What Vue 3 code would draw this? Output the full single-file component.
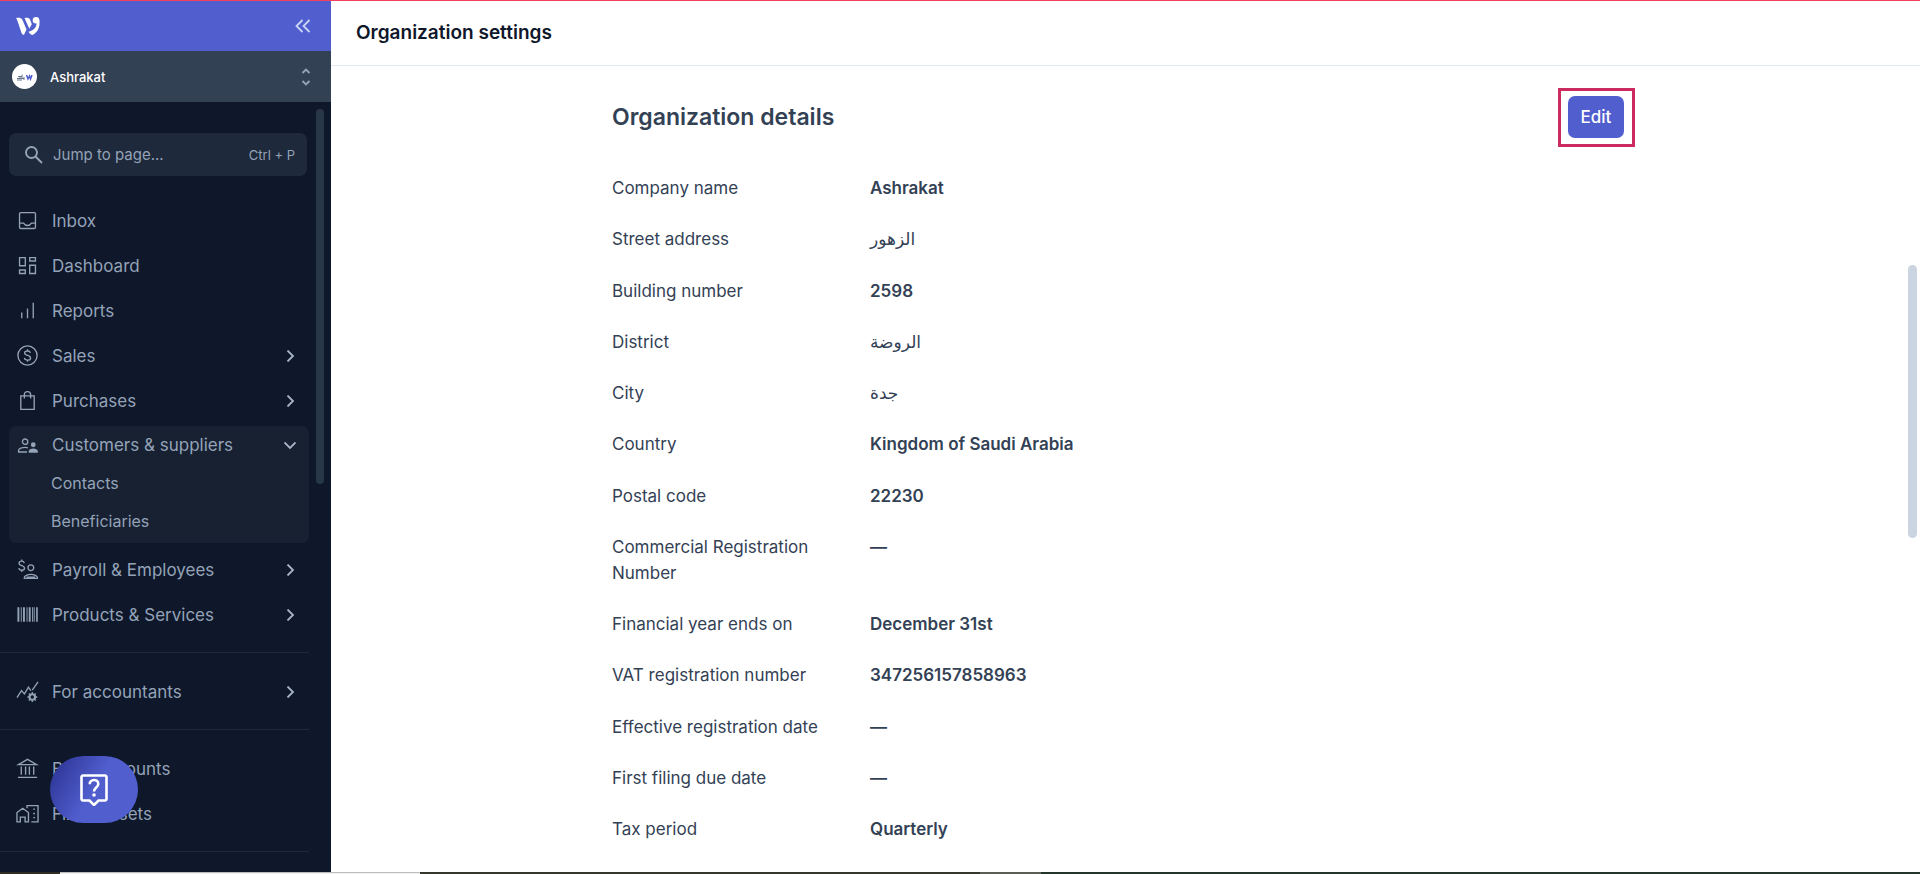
<script setup>
import { ref } from 'vue'

const search = ref('')

// each icon is a list of svg paths on a 24x24 grid
const icons = {
  inbox: { stroke: ['M5 3.7h14a1.3 1.3 0 0 1 1.3 1.3v14a1.3 1.3 0 0 1-1.3 1.3H5A1.3 1.3 0 0 1 3.7 19V5A1.3 1.3 0 0 1 5 3.7z', 'M3.7 14.7h4.2c1 1.6 2.4 2.5 4.1 2.5s3.1-.9 4.1-2.5h4.2'] },
  dashboard: { stroke: ['M3.7 3.7h6v8.6h-6z', 'M14.3 3.7h6v3.6h-6z', 'M3.7 16.7h6v3.6h-6z', 'M14.3 11.7h6v8.6h-6z'] },
  reports: { stroke: ['M6 14v6M12 10v10M18 4v16'] },
  sales: { stroke: ['M12 2a10 10 0 1 0 0 20 10 10 0 0 0 0-20z', 'M15 9.3C14.7 8 13.7 7.3 12 7.3c-1.9 0-3 .9-3 2.2 0 3.3 6.2 1.6 6.2 5 0 1.4-1.2 2.3-3.2 2.3-1.8 0-3-.8-3.3-2.3M12 5.5v1.8M12 16.8v1.8'] },
  purchases: { stroke: ['M5 7.2h14v14H5z', 'M8.7 10V6a3.3 3.3 0 0 1 6.6 0v4'] },
  customers: {
    stroke: ['M9.5 5.2a2.8 2.8 0 1 0 0 5.6 2.8 2.8 0 0 0 0-5.6z', 'M12.5 14.4c-1-.3-2-.4-3-.4-2.800 0-6.800 1.200-6.800 3.200v1.600h8.800'],
    fill: ['M18 8.7a2.500 2.500 0 1 1 0 5 2.500 2.500 0 0 1 0-5z', 'M13.300 19.500v-1.600c0-1.600 2.500-2.700 4.700-2.700s4.700 1.100 4.700 2.700v1.600z']
  },
  payroll: {
    stroke: ['M8.700 5.300C8.300 3.900 7.300 3.300 6 3.300c-1.600 0-2.800.8-2.800 2.200 0 3.200 5.700 1.700 5.700 4.900 0 1.500-1.200 2.300-2.800 2.300s-2.800-.8-3.100-2.200M6 1.500v1.800M6 12.700v1.800', 'M15.500 7.200a3 3 0 1 0 0 6 3 3 0 0 0 0-6z', 'M8.700 21.300v-1c0-1.700 3.500-3.200 6.800-3.200s6.800 1.500 6.800 3.200v1z'],
    fill: ['M11 19.300h9v2.200h-9z']
  },
  products: { fill: ['M1.500 4.500h2v15h-2zM5 4.500h1v15H5zM7.300 4.500h2v15h-2zM11 4.500h1v15h-1zM13.300 4.500h2v15h-2zM16.800 4.500h1v15h-1zM18.500 4.500h1v15h-1zM21 4.500h1.700v15H21z'] },
  accountants: {
    stroke: ['M1 18.500 5.700 11l3.100 3.500L13 7.500l2.500 3.500M17 10.500l6-8.500', 'M17 14.400a3.300 3.300 0 1 0 0 6.600 3.300 3.300 0 0 0 0-6.600z', 'M17 15.200a2.500 2.500 0 1 0 0 5 2.500 2.500 0 0 0 0-5z', 'M17 12.500v2M17 21v2M11.900 17.700h2M20.200 17.700h2M13.400 14.100l1.400 1.400M19.200 19.900l1.400 1.400M13.400 21.300l1.400-1.400M19.200 15.500l1.400-1.400']
  },
  bank: { stroke: ['M2.500 8 12 2.500 21.500 8z', 'M5.500 10v8.500M10 10v8.500M14 10v8.500M18.500 10v8.500M2 21.300h20'] },
  assets: { stroke: ['M1 20.800V11l6-4.500 6 4.500v9.800H9.500v-5h-5v5z', 'M11.500 6.500V3.700H23v17.100h-7', 'M18 7.500h1.800M18 12h1.800M18 16.300h1.800'] }
}

const navGroups = [
  [
    { label: 'Inbox', icon: 'inbox' },
    { label: 'Dashboard', icon: 'dashboard' },
    { label: 'Reports', icon: 'reports' },
    { label: 'Sales', icon: 'sales', arrow: true },
    { label: 'Purchases', icon: 'purchases', arrow: true },
    { label: 'Customers & suppliers', icon: 'customers', arrow: true, children: ['Contacts', 'Beneficiaries'] },
    { label: 'Payroll & Employees', icon: 'payroll', arrow: true },
    { label: 'Products & Services', icon: 'products', arrow: true }
  ],
  [{ label: 'For accountants', icon: 'accountants', arrow: true }],
  [
    { label: 'Bank accounts', icon: 'bank' },
    { label: 'Fixed assets', icon: 'assets' }
  ]
]

const details = [
  { label: 'Company name', value: 'Ashrakat' },
  { label: 'Street address', value: 'الزهور', arabic: true },
  { label: 'Building number', value: '2598' },
  { label: 'District', value: 'الروضة', arabic: true },
  { label: 'City', value: 'جدة', arabic: true },
  { label: 'Country', value: 'Kingdom of Saudi Arabia' },
  { label: 'Postal code', value: '22230' },
  { label: 'Commercial Registration Number', value: '—' },
  { label: 'Financial year ends on', value: 'December 31st' },
  { label: 'VAT registration number', value: '347256157858963' },
  { label: 'Effective registration date', value: '—' },
  { label: 'First filing due date', value: '—' },
  { label: 'Tax period', value: 'Quarterly' }
]
</script>

<template>
  <div class="page">
    <div class="app">
      <aside class="sidebar">
        <div class="brand">
          <svg class="logo" viewBox="0 0 24 18" fill="#fff">
            <path d="M0 1C2.500.4 5.500.6 6.500 3l4 9.500L8 17.800C6.500 17.800 6 17 5.500 16L1.500 4C1.100 2.700.6 1.800 0 1z" />
            <path d="M8.500 1c2.500-.6 4.700-.2 5.600 1.800l1.700 4.500-2.500 4.500L9.600 3.500C9.300 2.500 9 1.700 8.500 1z" />
            <circle cx="20" cy="3.300" r="3.300" />
            <path d="M23.300 3c1 6-1 12-6.800 15-1.500 0-3-1.500-4-3.200 4.500-1.300 8.200-4 8.200-9.300z" />
          </svg>
          <button class="icon-btn" aria-label="Collapse sidebar">
            <svg width="16" height="14" viewBox="0 0 16 14" fill="none" stroke="#cbd5f5" stroke-width="1.800">
              <path d="M7.500 1 1.500 7l6 6M14.500 1l-6 6 6 6" />
            </svg>
          </button>
        </div>

        <button class="org">
          <span class="org-avatar">
            <svg width="17" height="8" viewBox="0 0 17 8" fill="none">
              <path d="M1 5.500h7M4 3v2.500M6 1.500v4M2 3.500h4M1 7h5M8 4v3" stroke="#64748b" />
              <path d="m10.500 2 1.500 4 1.500-3 1 3 1.500-4" stroke="#505ece" stroke-width="1.500" />
            </svg>
          </span>
          <span class="org-name">Ashrakat</span>
          <svg width="10" height="18" viewBox="0 0 10 18" fill="none" stroke="#94a3b8" stroke-width="1.900">
            <path d="m1.500 5 3.500-3.500L8.500 5M1.500 13 5 16.500 8.500 13" />
          </svg>
        </button>

        <div class="sidebar-body">
          <label class="search">
            <svg width="18" height="18" viewBox="0 0 18 18" fill="none" stroke="#94a3b8" stroke-width="1.900">
              <circle cx="6.500" cy="6.500" r="5.500" />
              <path d="m10.500 10.500 6.500 6.500" />
            </svg>
            <input v-model="search" type="text" placeholder="Jump to page..." aria-label="Jump to page" />
            <kbd>Ctrl + P</kbd>
          </label>

          <nav class="nav">
            <div v-for="(group, i) in navGroups" :key="i" class="nav-group">
              <div v-for="item in group" :key="item.label" :class="{ 'nav-open': item.children }">
                <a href="#" class="nav-item">
                  <svg class="nav-icon" viewBox="0 0 24 24">
                    <path v-for="d in icons[item.icon].stroke" :key="d" :d="d" class="line" />
                    <path v-for="d in icons[item.icon].fill" :key="d" :d="d" class="solid" />
                  </svg>
                  <span class="nav-label">{{ item.label }}</span>
                  <svg v-if="item.arrow" class="chevron" :class="{ down: item.children }" viewBox="0 0 12 12">
                    <path d="m3.500.5 5.500 5.500-5.500 5.500" />
                  </svg>
                </a>
                <a v-for="child in item.children" :key="child" href="#" class="nav-child">{{ child }}</a>
              </div>
            </div>
          </nav>
          <div class="sidebar-thumb"></div>
        </div>

        <button class="help" aria-label="Help">
          <svg width="28" height="32" viewBox="0 0 28 32" fill="none" stroke="#fff" stroke-width="2.600">
            <path d="M3 1.500h22a1.500 1.500 0 0 1 1.500 1.500v22a1.500 1.500 0 0 1-1.500 1.500h-6.500L14 31l-4.500-4.500H3A1.500 1.500 0 0 1 1.500 25V3A1.500 1.500 0 0 1 3 1.500z" />
            <path d="M9.700 10.300c0-2.500 1.800-4.300 4.300-4.300s4.300 1.600 4.300 3.900c0 3.600-4.300 3.500-4.300 7.600" />
            <circle cx="14" cy="21" r="1.800" fill="#fff" stroke="none" />
          </svg>
        </button>
      </aside>

      <main class="main">
        <header class="main-header">
          <h1>Organization settings</h1>
        </header>
        <section class="content">
          <div class="content-inner">
            <div class="section-head">
              <h2>Organization details</h2>
              <div class="edit-wrap">
                <button class="edit">Edit</button>
                <span class="edit-frame"></span>
              </div>
            </div>
            <dl class="details">
              <div v-for="row in details" :key="row.label" class="detail">
                <dt>{{ row.label }}</dt>
                <dd :class="{ arabic: row.arabic }">{{ row.value }}</dd>
              </div>
            </dl>
          </div>
          <div class="main-thumb"></div>
        </section>
      </main>
    </div>
    <footer class="taskbar">
      <span class="task dark"></span>
      <span class="task light"></span>
      <span class="task olive"></span>
      <span class="task active"></span>
      <span class="task green"></span>
    </footer>
  </div>
</template>

<style>
body {
  margin: 0;
  overflow: hidden;
}
</style>

<style scoped>
.page {
  display: flex;
  flex-direction: column;
  height: 100vh;
  box-sizing: border-box;
  border-top: 1px solid #f43f5e;
  font-family: Inter, "Noto Sans", "Liberation Sans", sans-serif;
  font-size: 17px;
  line-height: 26px;
  color: #334155;
  background: #fff;
}

button {
  font: inherit;
  border: 0;
  cursor: pointer;
}

a {
  color: inherit;
  text-decoration: none;
}

.app {
  flex: 1;
  min-height: 0;
  display: flex;
}

.sidebar {
  position: relative;
  flex: none;
  width: 331px;
  display: flex;
  flex-direction: column;
  background: #0f172a;
  color: #94a3b8;
}

.brand {
  flex: none;
  display: flex;
  align-items: center;
  justify-content: space-between;
  height: 50px;
  padding: 0 20px 0 16px;
  background: #505ece;
}

.logo {
  width: 24px;
  height: 18px;
}

.icon-btn {
  display: flex;
  padding: 0;
  background: none;
}

.org {
  flex: none;
  display: flex;
  align-items: center;
  height: 51px;
  padding: 0 20px 0 12px;
  background: #334155;
  color: #fff;
  text-align: left;
}

.org-avatar {
  display: flex;
  align-items: center;
  justify-content: center;
  width: 25px;
  height: 25px;
  margin-right: 13px;
  border-radius: 50%;
  background: #fff;
}

.org-name {
  flex: 1;
  font-size: 13px;
  font-weight: 500;
}

.sidebar-body {
  position: relative;
  flex: 1;
  min-height: 0;
  overflow: hidden;
  padding: 31px 22px 0 0;
}

.search {
  display: flex;
  align-items: center;
  height: 43px;
  margin: 0 2px 0 9px;
  padding: 0 12px 0 16px;
  box-sizing: border-box;
  border-radius: 7px;
  background: #1e293b;
}

.search input {
  flex: 1;
  min-width: 0;
  margin-left: 10px;
  padding: 0;
  border: 0;
  outline: 0;
  background: none;
  font: inherit;
  font-size: 15px;
  color: #94a3b8;
}

.search input::placeholder {
  color: #94a3b8;
  opacity: 1;
}

.search kbd {
  font-family: inherit;
  font-size: 13px;
}

.nav {
  padding-top: 22px;
}

.nav-group {
  padding-bottom: 15px;
  margin-bottom: 16px;
  border-bottom: 1px solid #1e293b;
}

.nav-item {
  display: flex;
  align-items: center;
  height: 45px;
  padding: 0 13px 0 16px;
}

.nav-icon {
  width: 23px;
  height: 23px;
  margin-right: 13px;
}

.line {
  fill: none;
  stroke: #94a3b8;
  stroke-width: 1.4;
}

.solid {
  fill: #94a3b8;
}

.nav-label {
  flex: 1;
}

.chevron {
  width: 12px;
  height: 12px;
  fill: none;
  stroke: #a8b5c7;
  stroke-width: 1.8;
}

.down {
  transform: rotate(90deg);
}

.nav-open {
  margin: 3px 0 4px 9px;
  padding-bottom: 3px;
  border-radius: 7px;
  background: #172132;
}

.nav-open .nav-item {
  height: 38px;
  padding-left: 7px;
}

.nav-child {
  display: block;
  height: 38px;
  padding-left: 42px;
  font-size: 16px;
  line-height: 38px;
}

.sidebar-thumb {
  position: absolute;
  top: 7px;
  right: 7px;
  width: 8px;
  height: 375px;
  border-radius: 4px;
  background: #283747;
}

.help {
  position: absolute;
  left: 50px;
  bottom: 49px;
  display: flex;
  align-items: center;
  justify-content: center;
  width: 88px;
  height: 67px;
  padding: 0;
  border-radius: 34px;
  background: linear-gradient(120deg, #2d3494 5%, #505ece 50%);
}

.main {
  flex: 1;
  min-width: 0;
  display: flex;
  flex-direction: column;
}

.main-header {
  flex: none;
  display: flex;
  align-items: center;
  height: 64px;
  padding: 0 25px;
  border-bottom: 1px solid #e2e8f0;
}

h1 {
  margin: 0;
  font-size: 19px;
  font-weight: 600;
  color: #0f172a;
}

.content {
  position: relative;
  flex: 1;
  min-height: 0;
  display: flex;
  overflow: hidden;
  padding: 30px 15px 30px 0;
}

.content-inner {
  flex: 1;
  display: flex;
  flex-direction: column;
  max-width: 1012px;
  margin: 0 auto;
}

.section-head {
  display: flex;
  align-items: center;
  justify-content: space-between;
}

h2 {
  margin: 0;
  font-size: 23px;
  font-weight: 600;
}

.edit-wrap {
  position: relative;
}

.edit {
  display: block;
  min-width: 56px;
  height: 42px;
  padding: 0 12px;
  border-radius: 7px;
  background: #505ece;
  color: #fff;
  font-weight: 500;
}

.edit-frame {
  position: absolute;
  inset: -8px -11px -9px -10px;
  border: 3px solid #cb2b5e;
  pointer-events: none;
}

.details {
  flex: 1;
  display: flex;
  flex-direction: column;
  justify-content: space-between;
  gap: 24px;
  margin: 37px 0 0;
}

.detail {
  display: flex;
}

dt {
  flex: none;
  width: 234px;
  padding-right: 24px;
}

dd {
  margin: 0;
  font-weight: 600;
}

.arabic {
  font-family: "DejaVu Sans", sans-serif;
  font-weight: 400;
}

.main-thumb {
  position: absolute;
  top: 199px;
  right: 3px;
  width: 9px;
  height: 273px;
  border-radius: 5px;
  background: #cbd5e1;
}

.taskbar {
  flex: none;
  display: flex;
  height: 2px;
}

.dark {
  width: 60px;
  background: #2f2c24;
}

.light {
  width: 360px;
  background: #f3f3f3;
  border-top: 1px solid #bdbdbd;
  box-sizing: border-box;
}

.olive {
  width: 560px;
  background: #35362c;
}

.active {
  width: 61px;
  background: #5b5e54;
}

.green {
  flex: 1;
  background: #24352c;
}
</style>
